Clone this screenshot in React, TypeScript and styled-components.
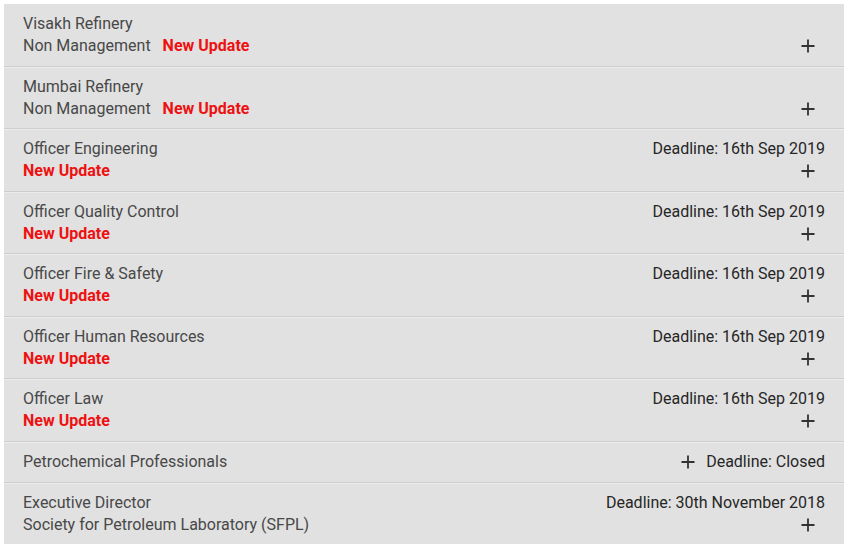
import React from 'react'
import styled, { createGlobalStyle } from 'styled-components'

const GlobalStyle = createGlobalStyle`
  body {
    margin: 0;
    background: #ffffff;
    font-family: Roboto, "Liberation Sans", sans-serif;
  }
`

interface Job {
  title: string
  sub?: string
  update?: boolean
  deadline?: string
  inline?: boolean
}

const jobs: Job[] = [
  { title: 'Visakh Refinery', sub: 'Non Management', update: true },
  { title: 'Mumbai Refinery', sub: 'Non Management', update: true },
  { title: 'Officer Engineering', update: true, deadline: '16th Sep 2019' },
  { title: 'Officer Quality Control', update: true, deadline: '16th Sep 2019' },
  { title: 'Officer Fire & Safety', update: true, deadline: '16th Sep 2019' },
  { title: 'Officer Human Resources', update: true, deadline: '16th Sep 2019' },
  { title: 'Officer Law', update: true, deadline: '16th Sep 2019' },
  { title: 'Petrochemical Professionals', deadline: 'Closed', inline: true },
  { title: 'Executive Director', sub: 'Society for Petroleum Laboratory (SFPL)', deadline: '30th November 2018' }
]

const Page = styled.div`
  padding: 4px 6px 6px 4px;
`

const List = styled.ul`
  list-style: none;
  margin: 0;
  padding: 0;
  width: 840px;
  background: #e1e1e1;
`

const Row = styled.li<{ $inline?: boolean }>`
  display: flex;
  justify-content: space-between;
  align-items: ${props => (props.$inline ? 'center' : 'flex-start')};
  padding: ${props => (props.$inline ? '9px 19px 9px' : '9px 19px 8.5px')};
  border-top: 1px solid #cdcdcd;
  box-shadow: inset 0 1px 0 #ececec;
  font-size: 16px;
  line-height: 22px;

  &:first-child {
    border-top: none;
    box-shadow: none;
  }
`

const Left = styled.div`
  display: flex;
  flex-direction: column;
`

const Title = styled.span`
  color: #484848;
`

const SubLine = styled.span`
  display: flex;
  gap: 12px;
  color: #484848;
`

const Update = styled.span`
  color: #ee1111;
  font-weight: 700;
`

const Right = styled.div<{ $inline?: boolean }>`
  display: flex;
  flex-direction: ${props => (props.$inline ? 'row' : 'column')};
  align-items: ${props => (props.$inline ? 'center' : 'flex-end')};
  gap: ${props => (props.$inline ? '11px' : '0')};
`

const Deadline = styled.span`
  color: #262626;
  min-height: 22px;
`

const PlusButton = styled.span<{ $inline?: boolean }>`
  display: flex;
  align-items: center;
  justify-content: center;
  height: 22px;
  margin-right: ${props => (props.$inline ? '0' : '10px')};
`

const Plus = () => (
  <svg width="14" height="14" viewBox="0 0 14 14">
    <path d="M7 0.5V13.5M0.5 7H13.5" stroke="#333" strokeWidth="1.8" fill="none" />
  </svg>
)

export default function App() {
  return (
    <Page>
      <GlobalStyle />
      <List>
        {jobs.map(job => (
          <Row key={job.title} $inline={job.inline}>
            <Left>
              <Title>{job.title}</Title>
              {job.sub ? (
                <SubLine>
                  {job.sub}
                  {job.update && <Update>New Update</Update>}
                </SubLine>
              ) : (
                job.update && <Update>New Update</Update>
              )}
            </Left>
            <Right $inline={job.inline}>
              {job.inline ? (
                <>
                  <PlusButton $inline>
                    <Plus />
                  </PlusButton>
                  <Deadline>Deadline: {job.deadline}</Deadline>
                </>
              ) : (
                <>
                  <Deadline>{job.deadline ? `Deadline: ${job.deadline}` : ''}</Deadline>
                  <PlusButton>
                    <Plus />
                  </PlusButton>
                </>
              )}
            </Right>
          </Row>
        ))}
      </List>
    </Page>
  )
}
